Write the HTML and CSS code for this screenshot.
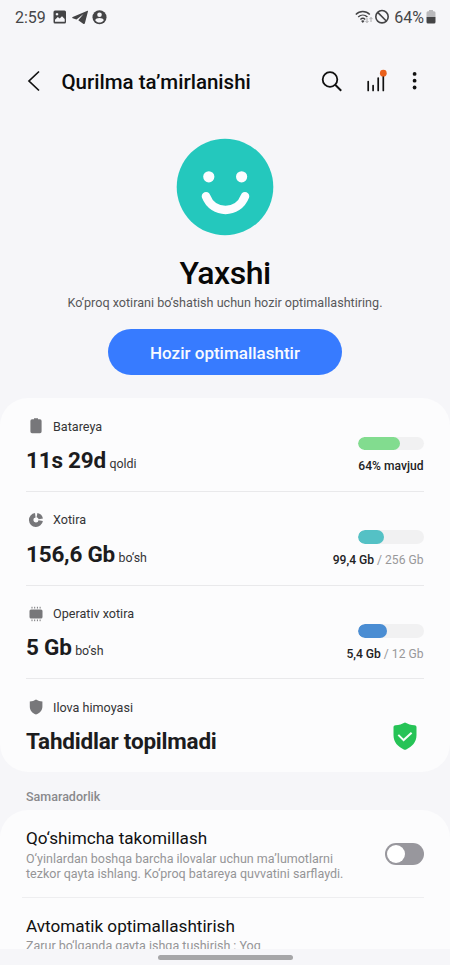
FILE: index.html
```html
<!DOCTYPE html>
<html lang="uz">
<head>
<meta charset="utf-8">
<meta name="viewport" content="width=device-width, initial-scale=1">
<title>Qurilma ta’mirlanishi</title>
<link rel="stylesheet" href="styles.css">
</head>
<body>
<div class="screen">
  <div class="status">
    <span class="clock">2:59</span>
    <svg class="status-left" width="56" height="16" viewBox="0 0 56 16">
      <path fill="#444446" fill-rule="evenodd" d="M2 1.500h9.500a1.500 1.500 0 0 1 1.500 1.500v10a1.500 1.500 0 0 1-1.500 1.500H2A1.500 1.500 0 0 1 .5 13V3A1.500 1.500 0 0 1 2 1.500zM2 12.800h9.700V10L9 7.300 6.700 9.600 4.800 8 2 10.800zM4 3.900a1.300 1.300 0 1 0 .01 0z"/>
      <path fill="#444446" d="M34.500 1.700 19.700 8.100c-.7.300-.6.900 0 1.100l3.800 1.200 7-5.300-5.200 6.200 5.200 3.600c.6.400 1.200.1 1.400-.6L35 2.300c.1-.5-.1-.8-.5-.6z"/>
      <circle cx="46.500" cy="8.200" r="7" fill="#444446"/>
      <circle cx="46.500" cy="5.700" r="2.300" fill="#f6f6f9"/>
      <path fill="#f6f6f9" d="M42.200 11.200c.5-3 8.100-3 8.600 0-1 1.500-2.700 2.300-4.300 2.300s-3.300-.8-4.300-2.300z"/>
    </svg>
    <svg class="status-right" width="36" height="16" viewBox="0 0 36 16">
      <g fill="none" stroke="#444446" stroke-width="1.400">
        <path d="M.8 5.600c4-4.100 10-4.100 14 0M3.200 8.100c2.700-2.700 6.500-2.700 9.200 0M5.400 10.500c1.500-1.400 3.400-1.400 4.800 0"/>
        <circle cx="27" cy="7.700" r="6.200" stroke-width="1.600"/>
        <path d="m22.700 3.400 8.600 8.600" stroke-width="1.600"/>
      </g>
      <path fill="#444446" d="m7.800 13.900-1.700-2c1-.9 2.400-.9 3.400 0z"/>
      <path d="M12 9v4.500m-1.500-1.500 1.500 1.600 1.500-1.600M16 13V8.500m-1.500 1.600L16 8.500l1.500 1.600" fill="none" stroke="#aaaaac"/>
    </svg>
    <span class="percent">64%</span>
    <svg class="status-batt" width="10" height="14" viewBox="0 0 10 14">
      <path fill="#b9b9bc" d="M3 0h4v1.200h1A1.500 1.500 0 0 1 9.500 2.700V7H.5V2.700A1.500 1.500 0 0 1 2 1.200h1z"/>
      <path fill="#444446" d="M.5 7h9v5A1.500 1.500 0 0 1 8 13.500H2A1.500 1.500 0 0 1 .5 12z"/>
    </svg>
  </div>

  <header class="bar">
    <svg class="back" width="14" height="22" viewBox="0 0 14 22"><path d="M12 1.500 2 11l10 9.500" fill="none" stroke="#111" stroke-width="1.700"/></svg>
    <h1>Qurilma ta’mirlanishi</h1>
    <svg class="actions" width="100" height="30" viewBox="0 0 100 30">
      <g fill="none" stroke="#111" stroke-width="2">
        <circle cx="10" cy="13.500" r="7.300" stroke-width="1.800"/><path d="m15.200 18.700 6 6"/>
        <g stroke-linecap="round" stroke-width="1.700"><path d="M48.200 15.500v9M53.100 19.500v5M58.200 12V24.500M63.300 9v15.500"/></g>
      </g>
      <circle cx="63.300" cy="7.200" r="3.400" fill="#e9601c"/>
      <g fill="#111"><circle cx="94.600" cy="7.900" r="1.900"/><circle cx="94.600" cy="14.700" r="1.900"/><circle cx="94.600" cy="21.500" r="1.900"/></g>
    </svg>
  </header>

  <section class="hero">
    <svg class="face" width="98" height="98" viewBox="0 0 98 98">
      <circle cx="49" cy="49" r="48.300" fill="#24c8bd"/>
      <circle cx="32.800" cy="38.800" r="5.600" fill="#fcfcff"/><circle cx="65.600" cy="38.800" r="5.600" fill="#fcfcff"/>
      <path d="M30 58.300c7 18.200 32 18.200 39 0" fill="none" stroke="#fcfcff" stroke-width="8.600" stroke-linecap="round"/>
    </svg>
    <h2><span>Yaxshi</span></h2>
    <p>Ko‘proq xotirani bo‘shatish uchun hozir optimallashtiring.</p>
    <button type="button">Hozir optimallashtir</button>
  </section>

  <main class="card">
    <div class="row">
      <div class="info">
        <div class="label"><svg width="16" height="16" viewBox="0 0 16 16"><path fill="#77777a" d="M6 .3h4v1h2a1.700 1.700 0 0 1 1.600 1.700v10.500a1.700 1.700 0 0 1-1.600 1.700H4a1.700 1.700 0 0 1-1.600-1.700V3A1.700 1.700 0 0 1 4 1.300h2z"/></svg><span>Batareya</span></div>
        <div class="value"><b>11s 29d</b><span>qoldi</span></div>
      </div>
      <div class="meter"><div class="track"><div class="fill green"></div></div><div class="caption"><b>64% mavjud</b></div></div>
    </div>
    <div class="row">
      <div class="info">
        <div class="label"><svg width="16" height="16" viewBox="0 0 16 16"><path d="M7.300 3.200a4.800 4.800 0 1 0 5.400 5.400" fill="none" stroke="#77777a" stroke-width="4.400"/><path d="M9 3.100a4.800 4.800 0 0 1 3.800 3.800" fill="none" stroke="#77777a" stroke-width="4.400"/></svg><span>Xotira</span></div>
        <div class="value"><b>156,6 Gb</b><span>bo‘sh</span></div>
      </div>
      <div class="meter"><div class="track"><div class="fill teal"></div></div><div class="caption"><b>99,4 Gb</b> / 256 Gb</div></div>
    </div>
    <div class="row">
      <div class="info">
        <div class="label"><svg width="16" height="16" viewBox="0 0 16 16"><rect x="1.500" y="3.500" width="13" height="9" rx="1.500" fill="#77777a"/><path d="M4 .8v1.700M6.700.8v1.700M9.400.8v1.700M12.100.8v1.700M4 13.500v1.700M6.700 13.500v1.700M9.400 13.500v1.700M12.100 13.500v1.700" stroke="#77777a"/></svg><span>Operativ xotira</span></div>
        <div class="value"><b>5 Gb</b><span>bo‘sh</span></div>
      </div>
      <div class="meter"><div class="track"><div class="fill blue"></div></div><div class="caption"><b>5,4 Gb</b> / 12 Gb</div></div>
    </div>
    <div class="row">
      <div class="info">
        <div class="label"><svg width="16" height="16" viewBox="0 0 16 16"><path fill="#77777a" d="M8 .5c2 1.200 4 1.900 6.400 2.100V7.500c0 4-2.700 6.500-6.400 8.100C4.300 14 1.800 11.500 1.800 7.500V2.600C4.200 2.400 6.100 1.700 8 .5z"/></svg><span>Ilova himoyasi</span></div>
        <div class="value"><b>Tahdidlar topilmadi</b></div>
      </div>
      <svg class="shield" width="24" height="28" viewBox="0 0 24 28"><path fill="#26c356" d="M12 .4c3 1.700 6 2.500 9.500 2.900 1.200.1 2 .8 2 2V13c0 7.500-4.500 11.500-10.300 14.500-.8.400-1.600.4-2.400 0C5 24.500.5 20.500.5 13V5.300c0-1.200.8-1.900 2-2C6 2.900 9 2.100 12 .4z"/><path d="m5.300 12.900 5.300 5.200 8-7.400" fill="none" stroke="#f7fff9" stroke-width="2"/></svg>
    </div>
  </main>

  <h3>Samaradorlik</h3>

  <section class="card settings">
    <div class="setting">
      <div class="setting-text">
        <h4>Qo‘shimcha takomillash</h4>
        <p>O‘yinlardan boshqa barcha ilovalar uchun ma’lumotlarni<br>tezkor qayta ishlang. Ko‘proq batareya quvvatini sarflaydi.</p>
      </div>
      <div class="switch"><i></i></div>
    </div>
    <div class="setting second">
      <div class="setting-text">
        <h4>Avtomatik optimallashtirish</h4>
        <p>Zarur bo‘lganda qayta ishga tushirish : Yoq</p>
      </div>
    </div>
  </section>
  <footer><i></i></footer>
</div>
</body>
</html>
```

FILE: styles.css
```css
* { box-sizing: border-box; margin: 0; padding: 0; }
body { background: #f6f6f9; font-family: Roboto, "Liberation Sans", sans-serif; color: #1c1c1e; }
svg { display: block; flex: none; }
.screen { width: 450px; height: 965px; overflow: hidden; display: flex; flex-direction: column; white-space: nowrap; }
.screen > * { flex: none; }

.status { height: 34px; padding: 0 14px 0 15px; display: flex; align-items: center; color: #464648; font-size: 16px; }
.clock { width: 31px; }
.status-left { margin-left: 7px; }
.status-right { margin-left: auto; }
.percent { margin-left: 3px; }
.status-batt { margin-left: 2px; }

.bar { height: 94px; padding: 0 30px 0 27px; display: flex; align-items: center; }
.bar h1 { margin: 1px 0 0 20.500px; font-size: 20.500px; font-weight: 500; color: #0c0c0c; }
.actions { margin-left: auto; }

.hero { height: 270px; padding-top: 10px; display: flex; flex-direction: column; align-items: center; }
.face { margin-right: 1px; }
.hero h2 { margin-top: 18px; height: 39px; line-height: 39px; font-size: 32px; letter-spacing: -0.5px; font-weight: 500; color: #080808; }
.hero p { height: 20px; line-height: 20px; font-size: 12.600px; color: #58585a; }
.hero button { margin-top: 16px; width: 234px; height: 46px; border: 0; border-radius: 23px; background: #377bff; color: #f8faff; font: 500 17px/46px Roboto, sans-serif; padding-top: 1px; }

.card { background: #fcfcfd; border-radius: 28px; padding: 0 26.500px 0 26px; }
.card:not(.settings) { height: 374px; }
.row { height: 93.800px; display: flex; justify-content: space-between; border-bottom: 1px solid #e9e9eb; }
.row:last-child { border: 0; }
.info { padding-top: 18px; }
.label { height: 20px; display: flex; align-items: center; gap: 9px; padding-left: 2px; font-size: 12.600px; color: #343436; }
.value { height: 30px; margin-top: 8.800px; line-height: 30px; display: flex; align-items: baseline; gap: 3.500px; font-size: 12.400px; color: #343436; }
.value b { font-size: 22.500px; letter-spacing: -0.220px; font-weight: 700; color: #1c1c1e; }
.meter { padding-top: 38.500px; display: flex; flex-direction: column; align-items: flex-end; }
.track { width: 66px; height: 13.500px; border-radius: 7px; background: #f1f1f2; overflow: hidden; }
.fill { height: 13.500px; border-radius: 7px; }
.green { width: 42px; background: #82dc8f; }
.teal { width: 26px; background: #54c1c5; }
.blue { width: 29px; background: #4a8dd3; }
.caption { margin-top: 7px; height: 18px; line-height: 18px; font-size: 12.100px; color: #98989a; }
.caption b { font-weight: 500; color: #222224; }
.shield { margin: 43px 6.500px 0 0; }

h3 { height: 38px; padding: 4px 26px 0; line-height: 41px; font-size: 12.500px; font-weight: 500; color: #89898c; }

.settings { height: 138.500px; border-radius: 28px 28px 0 0; overflow: hidden; padding: 0 26.500px 0 22px; }
.setting { height: 87.500px; padding: 16px 0 0 4px; display: flex; justify-content: space-between; border-bottom: 1px solid #eeeef0; }
.second { border: 0; }
.setting h4 { height: 25px; line-height: 24px; font-size: 17.150px; font-weight: 400; color: #111; }
.second h4 { height: 24px; }
.setting p { line-height: 15px; font-size: 12.500px; color: #959597; }
.switch { margin-top: 16.500px; width: 38.500px; height: 22px; border-radius: 11px; background: #98979d; padding: 2px; }
.switch i { display: block; width: 18px; height: 18px; border-radius: 9px; background: #fff; }

footer { height: 16.500px; display: flex; justify-content: center; padding-top: 6px; }
footer i { width: 135px; height: 5px; border-radius: 3px; background: #a6a6a8; }
```
